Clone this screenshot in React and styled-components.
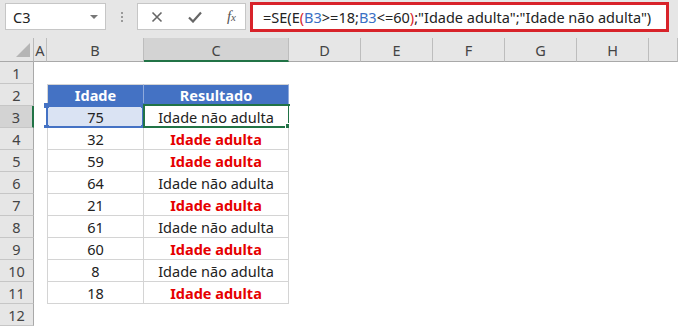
import React from 'react';
import styled, { createGlobalStyle } from 'styled-components';

const GlobalStyle = createGlobalStyle`
  html, body {
    margin: 0;
    padding: 0;
    background: #ffffff;
  }
  body {
    font-family: "Noto Sans", "Open Sans", sans-serif;
  }
`;

const Window = styled.div`
  width: 678px;
  height: 327px;
  overflow: hidden;
  display: flex;
  flex-direction: column;
  background: #ffffff;
`;

const FormulaBar = styled.div`
  height: 38px;
  flex: none;
  box-sizing: border-box;
  background: #e6e6e6;
  display: flex;
  align-items: flex-start;
  padding: 2px 0 0 5px;
`;

const NameBox = styled.div`
  width: 101px;
  height: 27px;
  margin-top: 1px;
  box-sizing: border-box;
  background: #ffffff;
  border: 1px solid #c6c6c6;
  display: flex;
  align-items: center;
  justify-content: space-between;
  padding: 0 7px 0 7px;
  font-size: 14.5px;
  color: #222;
`;

const DropArrow = styled.span`
  width: 0;
  height: 0;
  border-left: 4px solid transparent;
  border-right: 4px solid transparent;
  border-top: 4px solid #777;
`;

const Grip = styled.div`
  width: 31px;
  height: 27px;
  margin-top: 1px;
  display: flex;
  flex-direction: column;
  align-items: center;
  justify-content: center;
  gap: 2px;

  span {
    width: 2px;
    height: 2px;
    background: #9a9a9a;
  }
`;

const EditBox = styled.div`
  width: 109px;
  height: 27px;
  margin-top: 1px;
  box-sizing: border-box;
  background: #ffffff;
  border: 1px solid #c6c6c6;
  display: flex;
  align-items: center;
  justify-content: space-between;
  padding: 0 9px 0 13px;
  color: #666;
`;

const FxLabel = styled.span`
  font-family: "Liberation Serif", "DejaVu Serif", serif;
  font-style: italic;
  font-size: 15px;
  color: #555;

  sub {
    font-size: 11px;
    vertical-align: 0;
  }
`;

const FormulaInput = styled.div`
  width: 419px;
  height: 30px;
  margin-left: 4px;
  box-sizing: border-box;
  background: #ffffff;
  border: 3px solid #d8232a;
  display: flex;
  align-items: center;
  padding-left: 10px;
  font-size: 14.5px;
  color: #222;
  white-space: nowrap;
`;

const Token = styled.span`
  color: ${p => (p.$kind === 'ref' ? '#3a6fc4' : p.$kind === 'paren' ? '#d8232a' : '#222')};
`;

const Sheet = styled.div`
  display: grid;
  grid-template-columns: 34px 13px 97px 145px 72px 72px 72px 72px 72px 1fr;
  grid-template-rows: 24px repeat(12, 22px);
  font-size: 14.5px;
`;

const Corner = styled.div`
  background: #e6e6e6;
  border-right: 1px solid #b9b9b9;
  border-bottom: 1px solid #a9a9a9;
  box-sizing: border-box;
  display: flex;
  align-items: flex-end;
  justify-content: flex-end;
  padding: 0 3px 4px 0;

  &::after {
    content: '';
    width: 0;
    height: 0;
    border-left: 14px solid transparent;
    border-bottom: 14px solid #b5b5b5;
  }
`;

const ColHead = styled.div`
  box-sizing: border-box;
  background: ${p => (p.$selected ? '#d3d3d3' : '#e6e6e6')};
  border-right: 1px solid #bdbdbd;
  border-bottom: ${p => (p.$selected ? '2px solid #217346' : '1px solid #a9a9a9')};
  display: flex;
  align-items: center;
  justify-content: center;
  padding-top: ${p => (p.$selected ? '1px' : '0')};
  color: #444;
`;

const RowHead = styled.div`
  box-sizing: border-box;
  background: ${p => (p.$selected ? '#d3d3d3' : '#e6e6e6')};
  border-bottom: 1px solid #c6c6c6;
  border-right: ${p => (p.$selected ? '2px solid #217346' : '1px solid #a9a9a9')};
  display: flex;
  align-items: center;
  justify-content: center;
  color: #444;
`;

const Cell = styled.div`
  position: relative;
  box-sizing: border-box;
  display: flex;
  align-items: center;
  justify-content: center;
  white-space: nowrap;
  color: ${p => (p.$red ? '#e60000' : p.$head ? '#ffffff' : '#222')};
  font-weight: ${p => (p.$red || p.$head ? 700 : 400)};
  background: ${p => (p.$head ? '#4472c4' : p.$ref ? '#dae3f3' : '#ffffff')};
  ${p => p.$table && `
    border-right: 1px solid ${p.$head ? '#8faadc' : '#d4d4d4'};
    border-bottom: 1px solid #d4d4d4;
  `}
  ${p => p.$first && 'border-left: 1px solid #d4d4d4;'}
  ${p => p.$top && 'border-top: 1px solid #d4d4d4;'}
`;

const ActiveFrame = styled.span`
  position: absolute;
  inset: -2px -2px -1px -1px;
  border: 2px solid #217346;
  pointer-events: none;

  &::after {
    content: '';
    position: absolute;
    right: -4px;
    bottom: -4px;
    width: 5px;
    height: 5px;
    background: #217346;
    border: 1px solid #ffffff;
  }
`;

const RefFrame = styled.span`
  position: absolute;
  inset: -1px -1px -1px -2px;
  border: 2px solid #4472c4;
  pointer-events: none;
`;

const RefHandle = styled.span`
  position: absolute;
  width: 5px;
  height: 5px;
  background: #4472c4;
  ${p => (p.$top ? 'top: -3px;' : 'bottom: -3px;')}
  ${p => (p.$left ? 'left: -4px;' : 'right: -3px;')}
`;

const columns = ['A', 'B', 'C', 'D', 'E', 'F', 'G', 'H', ''];

const data = [
  [75, false],
  [32, true],
  [59, true],
  [64, false],
  [21, true],
  [61, false],
  [60, true],
  [8, false],
  [18, true],
];

const formula = [
  ['=SE(E', 'text'],
  ['(', 'paren'],
  ['B3', 'ref'],
  ['>=18;', 'text'],
  ['B3', 'ref'],
  ['<=60', 'text'],
  [')', 'paren'],
  [';"Idade adulta";"Idade não adulta")', 'text'],
];

const CrossIcon = () => (
  <svg width="12" height="12" viewBox="0 0 12 12">
    <path d="M1.5 1.5 L10.5 10.5 M10.5 1.5 L1.5 10.5" stroke="#666" strokeWidth="1.6" fill="none" />
  </svg>
);

const CheckIcon = () => (
  <svg width="14" height="12" viewBox="0 0 14 12">
    <path d="M1 6.5 L5 10.5 L13 1.5" stroke="#666" strokeWidth="2.2" fill="none" />
  </svg>
);

const emptyRow = key => columns.map((c, i) => <Cell key={`${key}-${i}`} />);

const App = () => {
  const rows = [];
  for (let r = 1; r <= 12; r++) {
    const cells = [];
    cells.push(<RowHead key={`h${r}`} $selected={r === 3}>{r}</RowHead>);
    if (r === 2) {
      cells.push(<Cell key="a2" />);
      cells.push(<Cell key="b2" $table $head $first $top>Idade</Cell>);
      cells.push(<Cell key="c2" $table $head $top>Resultado</Cell>);
      for (let i = 0; i < 6; i++) cells.push(<Cell key={`e2-${i}`} />);
    } else if (r >= 3 && r <= 11) {
      const [age, adult] = data[r - 3];
      const active = r === 3;
      cells.push(<Cell key={`a${r}`} />);
      cells.push(
        <Cell key={`b${r}`} $table $first $ref={active}>
          {age}
          {active && (
            <>
              <RefFrame />
              <RefHandle $top $left />
              <RefHandle $left />
              <RefHandle $top />
              <RefHandle />
            </>
          )}
        </Cell>
      );
      cells.push(
        <Cell key={`c${r}`} $table $red={adult}>
          {adult ? 'Idade adulta' : 'Idade não adulta'}
          {active && <ActiveFrame />}
        </Cell>
      );
      for (let i = 0; i < 6; i++) cells.push(<Cell key={`e${r}-${i}`} />);
    } else {
      cells.push(...emptyRow(`r${r}`));
    }
    rows.push(...cells);
  }

  return (
    <Window>
      <GlobalStyle />
      <FormulaBar>
        <NameBox>
          C3
          <DropArrow />
        </NameBox>
        <Grip>
          <span />
          <span />
          <span />
        </Grip>
        <EditBox>
          <CrossIcon />
          <CheckIcon />
          <FxLabel>
            f<sub>x</sub>
          </FxLabel>
        </EditBox>
        <FormulaInput>
          {formula.map(([text, kind], i) => (
            <Token key={i} $kind={kind}>
              {text}
            </Token>
          ))}
        </FormulaInput>
      </FormulaBar>
      <Sheet>
        <Corner />
        {columns.map(c => (
          <ColHead key={c || 'end'} $selected={c === 'C'}>
            {c}
          </ColHead>
        ))}
        {rows}
      </Sheet>
    </Window>
  );
};

export default App;
